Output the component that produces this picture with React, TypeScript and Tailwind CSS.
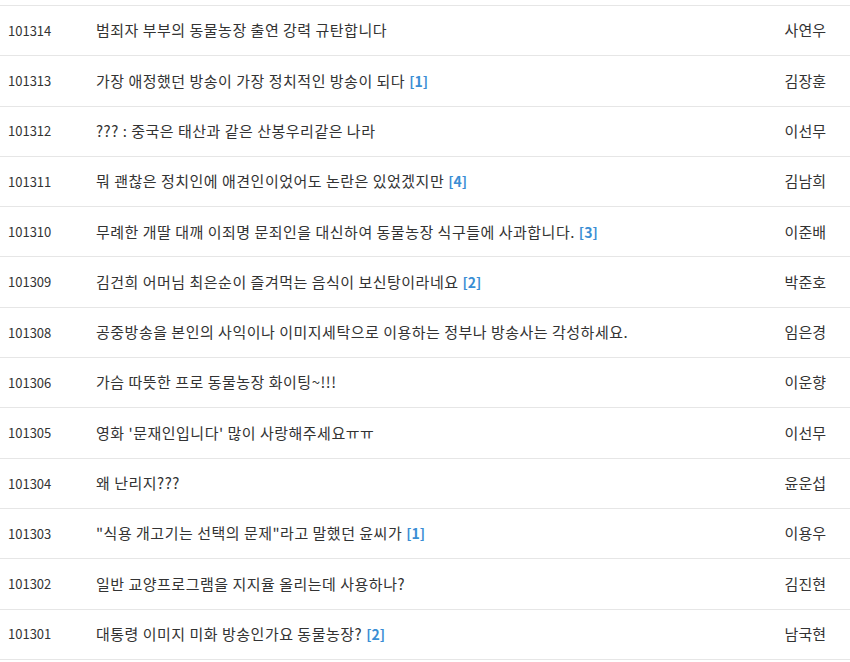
const rows: { no: string; title: string; count?: number; author: string }[] = [
  { no: "101314", title: "범죄자 부부의 동물농장 출연 강력 규탄합니다", author: "사연우" },
  { no: "101313", title: "가장 애정했던 방송이 가장 정치적인 방송이 되다", count: 1, author: "김장훈" },
  { no: "101312", title: "??? : 중국은 태산과 같은 산봉우리같은 나라", author: "이선무" },
  { no: "101311", title: "뭐 괜찮은 정치인에 애견인이었어도 논란은 있었겠지만", count: 4, author: "김남희" },
  { no: "101310", title: "무례한 개딸 대깨 이죄명 문죄인을 대신하여 동물농장 식구들에 사과합니다.", count: 3, author: "이준배" },
  { no: "101309", title: "김건희 어머님 최은순이 즐겨먹는 음식이 보신탕이라네요", count: 2, author: "박준호" },
  { no: "101308", title: "공중방송을 본인의 사익이나 이미지세탁으로 이용하는 정부나 방송사는 각성하세요.", author: "임은경" },
  { no: "101306", title: "가슴 따뜻한 프로 동물농장 화이팅~!!!", author: "이운향" },
  { no: "101305", title: "영화 '문재인입니다' 많이 사랑해주세요ㅠㅠ", author: "이선무" },
  { no: "101304", title: "왜 난리지???", author: "윤운섭" },
  { no: "101303", title: "\"식용 개고기는 선택의 문제\"라고 말했던 윤씨가", count: 1, author: "이용우" },
  { no: "101302", title: "일반 교양프로그램을 지지율 올리는데 사용하나?", author: "김진현" },
  { no: "101301", title: "대통령 이미지 미화 방송인가요 동물농장?", count: 2, author: "남국현" },
];

export default function App() {
  return (
    <div
      className="w-[850px] h-[662px] overflow-hidden bg-white text-[15px] text-[#333]"
      style={{ fontFamily: '"Noto Sans CJK KR", "Noto Sans", sans-serif' }}
    >
      <div className="h-[6px] border-b border-[#e6e6e6]" />
      {rows.map((r) => (
        <div key={r.no} className="h-[50.3px] flex items-center border-b border-[#e6e6e6]">
          <div className="w-[96px] pl-[8px] shrink-0 text-[13px]">{r.no}</div>
          <div className="flex-1 min-w-0 truncate tracking-[0.5px]">
            {r.title}
            {r.count !== undefined && (
              <span className="ml-[4px] text-[14px] font-bold tracking-normal text-[#3a8ed4]">[{r.count}]</span>
            )}
          </div>
          <div className="w-[90px] pr-[24px] text-right shrink-0">{r.author}</div>
        </div>
      ))}
    </div>
  );
}
